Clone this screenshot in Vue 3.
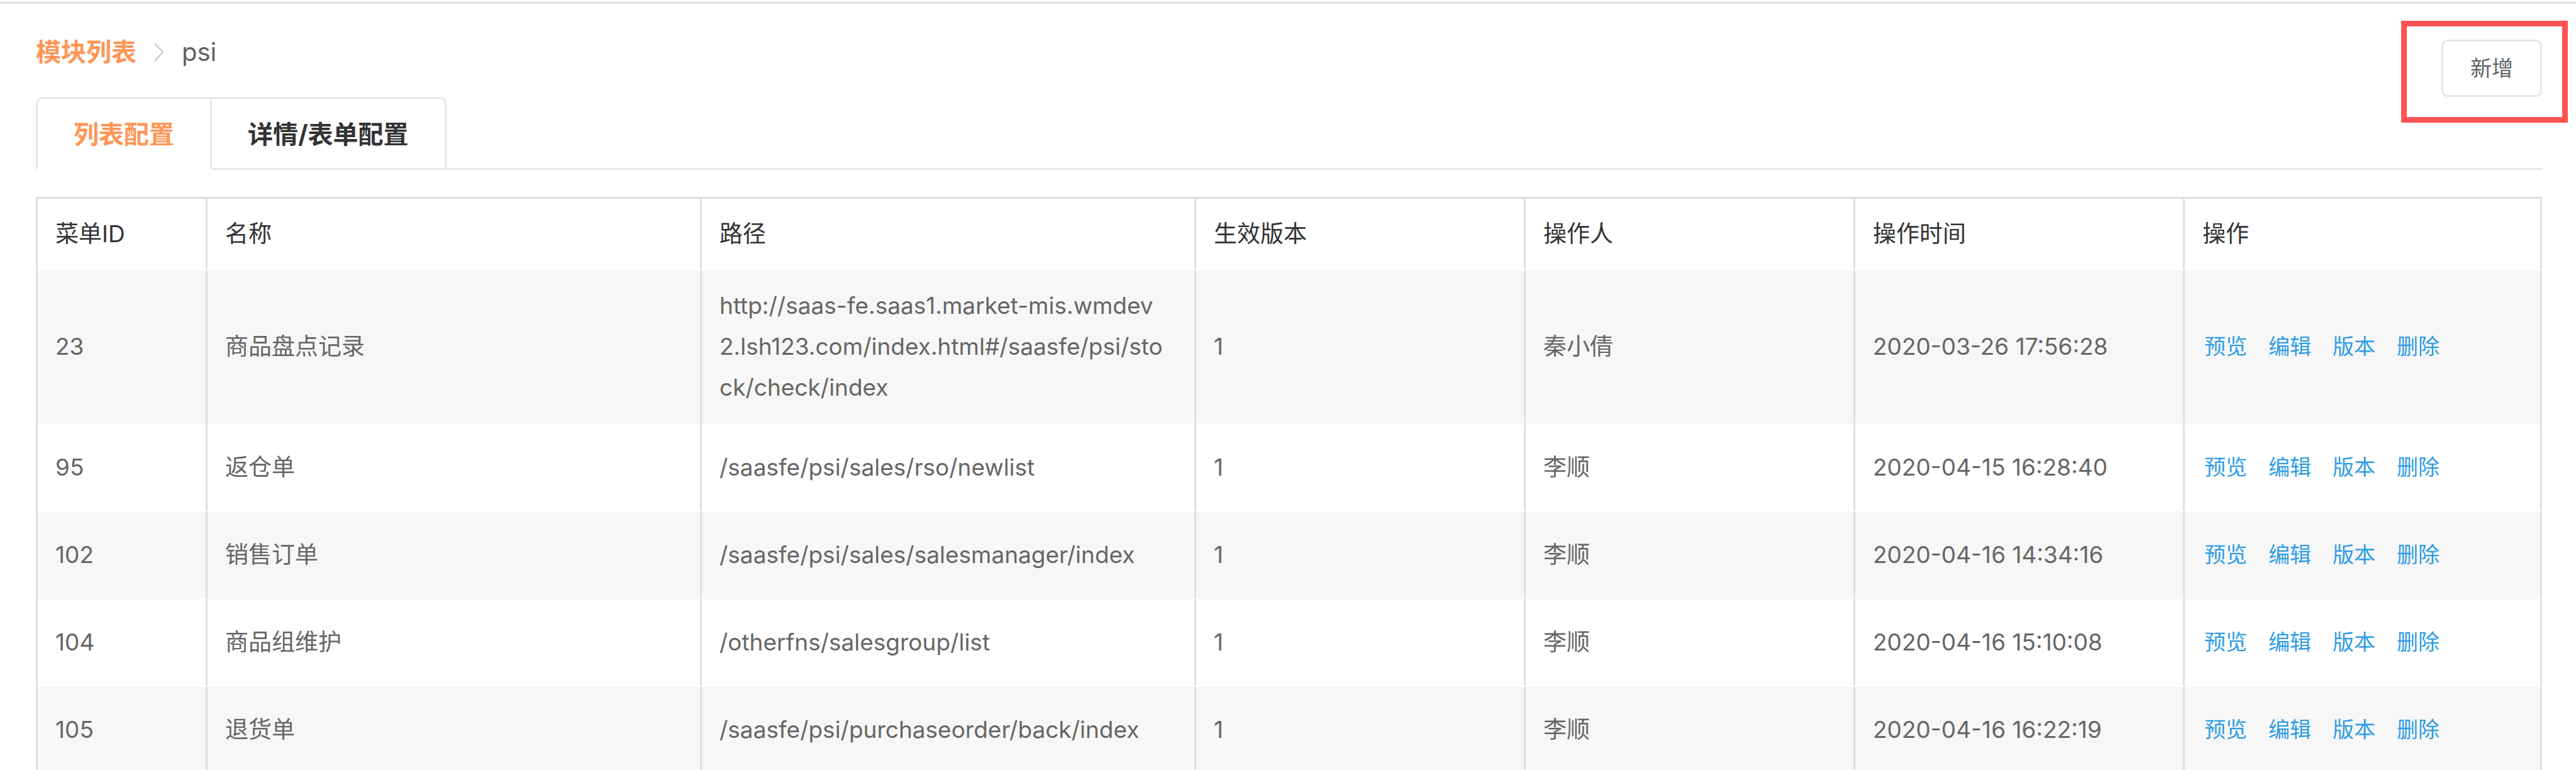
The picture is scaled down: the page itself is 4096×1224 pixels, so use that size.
<script setup>
const columns = ['菜单ID', '名称', '路径', '生效版本', '操作人', '操作时间', '操作']
const actions = ['预览', '编辑', '版本', '删除']
const rows = [
  { id: 23, name: '商品盘点记录', path: 'http://saas-fe.saas1.market-mis.wmdev2.lsh123.com/index.html#/saasfe/psi/stock/check/index', version: 1, operator: '秦小倩', time: '2020-03-26 17:56:28' },
  { id: 95, name: '返仓单', path: '/saasfe/psi/sales/rso/newlist', version: 1, operator: '李顺', time: '2020-04-15 16:28:40' },
  { id: 102, name: '销售订单', path: '/saasfe/psi/sales/salesmanager/index', version: 1, operator: '李顺', time: '2020-04-16 14:34:16' },
  { id: 104, name: '商品组维护', path: '/otherfns/salesgroup/list', version: 1, operator: '李顺', time: '2020-04-16 15:10:08' },
  { id: 105, name: '退货单', path: '/saasfe/psi/purchaseorder/back/index', version: 1, operator: '李顺', time: '2020-04-16 16:22:19' },
]
</script>

<template>
  <main class="page">
    <header class="topbar">
      <nav class="breadcrumb" aria-label="breadcrumb">
        <a class="crumb-link" href="#">模块列表</a>
        <svg class="crumb-sep" viewBox="0 0 16 30" aria-hidden="true">
          <path d="M1 1 L14 15 L1 29" fill="none" stroke="#c0c4cc" stroke-width="2" />
        </svg>
        <span class="crumb-current">psi</span>
      </nav>
      <div class="create">
        <button class="create-btn" type="button">新增</button>
        <span class="highlight" aria-hidden="true"></span>
      </div>
    </header>

    <div class="tabs" role="tablist">
      <button class="tab active" type="button" role="tab" aria-selected="true">列表配置</button>
      <button class="tab" type="button" role="tab" aria-selected="false">详情/表单配置</button>
      <span class="tabs-rest"></span>
    </div>

    <table class="grid">
      <colgroup>
        <col class="c-id" />
        <col class="c-wide" />
        <col class="c-wide" />
        <col class="c-mid" />
        <col class="c-mid" />
        <col class="c-mid" />
        <col />
      </colgroup>
      <thead>
        <tr>
          <th v-for="c in columns" :key="c" scope="col">{{ c }}</th>
        </tr>
      </thead>
      <tbody>
        <tr v-for="r in rows" :key="r.id">
          <td>{{ r.id }}</td>
          <td>{{ r.name }}</td>
          <td class="path">{{ r.path }}</td>
          <td>{{ r.version }}</td>
          <td>{{ r.operator }}</td>
          <td>{{ r.time }}</td>
          <td>
            <div class="actions">
              <a v-for="a in actions" :key="a" href="#">{{ a }}</a>
            </div>
          </td>
        </tr>
      </tbody>
    </table>
  </main>
</template>

<style>
body {
  margin: 0;
  background: #fff;
}
</style>

<style scoped>
.page {
  box-sizing: border-box;
  height: 100vh;
  overflow: hidden;
  padding-top: 3px;
  font-family: Inter, "Noto Sans CJK SC", sans-serif;
  color: #606266;
}
.topbar {
  display: flex;
  justify-content: space-between;
  align-items: flex-start;
  border-top: 3px solid #dcdce4;
  padding: 57px 54px 0 57px;
}
.breadcrumb {
  display: flex;
  align-items: center;
  font-size: 40px;
  line-height: 40px;
}
.crumb-link {
  color: #ff9657;
  font-weight: 700;
  text-decoration: none;
}
.crumb-sep {
  width: 16px;
  height: 30px;
  margin: 0 28px;
}
.create {
  position: relative;
  display: flex;
}
.create-btn {
  box-sizing: border-box;
  height: 91px;
  padding: 0 43px;
  border: 3px solid #e4e7ed;
  border-radius: 9px;
  background: #fff;
  color: #606266;
  font: inherit;
  font-size: 34px;
  line-height: 85px;
}
.highlight {
  position: absolute;
  inset: -30px -41px -41px -64px;
  border: 9px solid #ff5252;
  pointer-events: none;
}
.tabs {
  display: flex;
  margin: 0 54px 0 57px;
}
.tab {
  box-sizing: border-box;
  height: 116px;
  padding: 4px 57px 0;
  border: 3px solid #e4e7ed;
  border-left-width: 0;
  background: #fff;
  color: #333;
  font: inherit;
  font-size: 40px;
  font-weight: 700;
  line-height: 106px;
}
.tab.active {
  border-left-width: 3px;
  border-bottom-color: #fff;
  border-top-left-radius: 11px;
  color: #ff9657;
}
.tab:nth-child(2) {
  border-top-right-radius: 11px;
}
.tabs-rest {
  flex: 1;
  border-bottom: 3px solid #e4e7ed;
}
.grid {
  width: calc(100% - 111px);
  margin: 43px 54px 0 57px;
  border-collapse: separate;
  border-spacing: 0;
  border-top: 3px solid #dcdfe6;
  border-left: 3px solid #dcdfe6;
  table-layout: fixed;
  font-size: 37px;
  line-height: 65px;
}
.c-id {
  width: 270px;
}
.c-wide {
  width: 786px;
}
.c-mid {
  width: 524px;
}
.grid th,
.grid td {
  box-sizing: border-box;
  border-right: 3px solid #dcdfe6;
  border-bottom: 3px solid transparent;
  text-align: left;
  vertical-align: middle;
  word-break: break-all;
}
.grid th {
  height: 114px;
  padding: 0 28px;
  color: #333;
  font-weight: 400;
}
.grid td {
  height: 139px;
  padding: 23px 28px 24px;
  color: #666;
}
.grid td.path {
  padding-right: 50px;
}
.grid tbody tr:nth-child(odd) td {
  background: #f7f7f7;
}
.actions {
  display: flex;
  gap: 34px;
  padding-left: 3px;
  font-size: 34px;
}
.actions a {
  color: #2d9ce6;
  text-decoration: none;
}
</style>
